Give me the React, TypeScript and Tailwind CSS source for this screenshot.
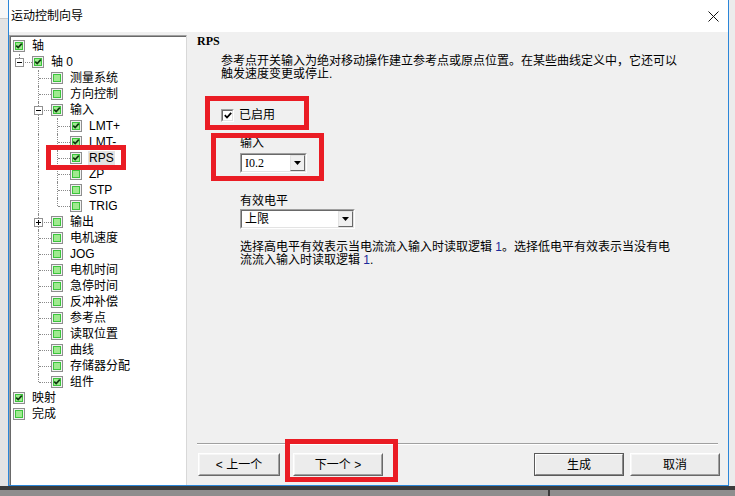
import React from 'react';

const FONT = "font-['Liberation_Sans','Noto_Sans_CJK_SC',sans-serif]";

type Row = {
  t: string;
  l: number;
  c: boolean;
  e?: '-' | '+';
  g?: boolean[];
  last?: boolean;
  sel?: boolean;
};

const L2 = (t: string, c = false, extra: Partial<Row> = {}): Row => ({ t, l: 2, c, g: [false], ...extra });
const L3 = (t: string, c = false, extra: Partial<Row> = {}): Row => ({ t, l: 3, c, g: [false, true], ...extra });

const rows: Row[] = [
  { t: '轴', l: 0, c: true },
  { t: '轴 0', l: 1, c: true, e: '-', last: true, g: [] },
  L2('测量系统'),
  L2('方向控制'),
  L2('输入', true, { e: '-' }),
  L3('LMT+', true),
  L3('LMT-', true),
  L3('RPS', true, { sel: true }),
  L3('ZP'),
  L3('STP'),
  L3('TRIG', false, { last: true }),
  L2('输出', false, { e: '+' }),
  L2('电机速度'),
  L2('JOG'),
  L2('电机时间'),
  L2('急停时间'),
  L2('反冲补偿'),
  L2('参考点'),
  L2('读取位置'),
  L2('曲线'),
  L2('存储器分配'),
  L2('组件', true, { last: true }),
  { t: '映射', l: 0, c: true },
  { t: '完成', l: 0, c: false },
];

function TreeCheck({ checked }: { checked: boolean }) {
  return (
    <svg width="12" height="12" viewBox="0 0 12 12" className="shrink-0">
      <rect x="0.5" y="0.5" width="11" height="11" fill="#f2f2f2" stroke="#8e8e8e" />
      <rect x="2" y="2" width="8" height="8" fill="#3cc43c" />
      <rect x="3" y="3" width="6" height="6" fill="#9fea8f" />
      {checked && <path d="M3.2 5.6 L5.2 7.6 L8.8 3.6" fill="none" stroke="#123a12" strokeWidth="1.7" />}
    </svg>
  );
}

function Expander({ kind }: { kind: '-' | '+' }) {
  return (
    <div className="absolute left-[2px] top-[4px] w-[9px] h-[9px] border border-[#919191] bg-white">
      <div className="absolute left-[1px] top-[3px] w-[5px] h-[1px] bg-black" />
      {kind === '+' && <div className="absolute left-[3px] top-[1px] w-[1px] h-[5px] bg-black" />}
    </div>
  );
}

function TreeRow({ r }: { r: Row }) {
  const cells: React.ReactNode[] = [];
  if (r.l > 0) {
    (r.g || []).forEach((v, i) => {
      cells.push(
        <div key={'g' + i} className="relative w-[19px] h-full shrink-0">
          {v && <div className="absolute left-[6px] top-0 h-full border-l border-dotted border-[#8a8a8a]" />}
        </div>
      );
    });
    cells.push(
      <div key="conn" className="relative w-[19px] h-full shrink-0">
        <div
          className={
            r.last
              ? 'absolute left-[6px] top-0 h-[8px] border-l border-dotted border-[#8a8a8a]'
              : 'absolute left-[6px] top-0 h-full border-l border-dotted border-[#8a8a8a]'
          }
        />
        <div className="absolute left-[7px] top-[8px] w-[12px] border-t border-dotted border-[#8a8a8a]" />
        {r.e && <Expander kind={r.e} />}
      </div>
    );
  }
  return (
    <div className="h-[16px] flex items-center pl-[2px]">
      {cells}
      <TreeCheck checked={r.c} />
      <span
        className={
          r.sel
            ? 'ml-[6px] px-[1px] bg-[#e3e3e3] text-[12px] leading-[14px] text-black whitespace-nowrap'
            : 'ml-[7px] text-[12px] leading-[14px] text-black whitespace-nowrap'
        }
      >
        {r.t}
      </span>
    </div>
  );
}

function Select({ width, value }: { width: string; value: string }) {
  return (
    <div className={`${width} h-[20px] border border-t-[#a0a0a0] border-l-[#a0a0a0] border-b-white border-r-white`}>
      <div className="w-full h-full flex items-center bg-white border border-t-[#696969] border-l-[#696969] border-b-[#e3e3e3] border-r-[#e3e3e3]">
        <span className="flex-1 pl-[3px] text-[12px] leading-[14px] text-black font-['Liberation_Serif','Noto_Sans_CJK_SC',serif]">
          {value}
        </span>
        <div className="w-[15px] h-full bg-[#f0f0f0] flex items-center justify-center border border-t-[#e3e3e3] border-l-[#e3e3e3] border-b-[#696969] border-r-[#696969]">
          <svg width="7" height="4" viewBox="0 0 7 4">
            <path d="M0 0 H7 L3.5 4 Z" fill="#000" />
          </svg>
        </div>
      </div>
    </div>
  );
}

function Btn({ label, width, def }: { label: React.ReactNode; width: string; def?: boolean }) {
  if (def) {
    return (
      <div className={`${width} h-[23px] border border-[#5a5a5a]`}>
        <div className="w-full h-full flex items-center justify-center bg-[#ececec] border border-t-white border-l-white border-b-[#8a8a8a] border-r-[#8a8a8a] text-[12px] text-black">
          {label}
        </div>
      </div>
    );
  }
  return (
    <div className={`${width} h-[23px] border border-t-white border-l-white border-b-[#696969] border-r-[#696969]`}>
      <div className="w-full h-full flex items-center justify-center bg-[#ececec] border border-t-[#f6f6f6] border-l-[#f6f6f6] border-b-[#a0a0a0] border-r-[#a0a0a0] text-[12px] text-black">
        {label}
      </div>
    </div>
  );
}

export default function App() {
  return (
    <div className={`relative w-[735px] h-[496px] overflow-hidden bg-[#e8e8e8] ${FONT}`}>
      <div className="flex h-[486px]">
        <div className="w-[8px] h-full flex flex-col">
          <div className="h-[18px] bg-[#f7f7f7]" />
          <div className="h-[1px] bg-[#c8c8c8]" />
          <div className="flex-1 bg-[#e4e4e4]" />
        </div>
        <div className="w-[721px] h-full flex flex-col border-x border-b border-[#2b86d8] bg-[#f0f0f0]">
          <div className="h-[32px] bg-white flex items-center justify-between pl-[2px] pr-[9px]">
            <span className="text-[12px] text-black">运动控制向导</span>
            <svg width="11" height="11" viewBox="0 0 11 11">
              <path d="M0.5 0.5 L10.5 10.5 M10.5 0.5 L0.5 10.5" stroke="#111" strokeWidth="1" />
            </svg>
          </div>
          <div className="flex flex-1 min-h-0">
            <div className="w-[178px] mt-[3px] h-[450px] border-t border-l border-[#a0a0a0] border-r border-r-[#d8d8d8]">
              <div className="w-full h-full bg-white border-t border-l border-[#696969] pt-[1px]">
                {rows.map((r, i) => (
                  <TreeRow key={i} r={r} />
                ))}
              </div>
            </div>
            <div className="flex-1 flex flex-col">
              <div className="pl-[10px] mt-[2px] h-[14px] text-[12px] leading-[14px] font-bold text-black font-['Liberation_Serif',serif]">
                RPS
              </div>
              <div className="pl-[34px] mt-[7px] text-[12px] leading-[13px] text-black whitespace-nowrap">
                参考点开关输入为绝对移动操作建立参考点或原点位置。在某些曲线定义中，它还可以
                <br />
                触发速度变更或停止.
              </div>
              <div className="pl-[34px] mt-[26px] h-[16px] flex items-center">
                <div className="w-[13px] h-[13px] border border-t-[#a0a0a0] border-l-[#a0a0a0] border-b-white border-r-white">
                  <div className="w-full h-full bg-white border border-t-[#696969] border-l-[#696969] border-b-[#e3e3e3] border-r-[#e3e3e3] flex items-center justify-center">
                    <svg width="8" height="7" viewBox="0 0 8 7">
                      <path d="M0.8 3.2 L3 5.5 L7.2 0.8" fill="none" stroke="#000" strokeWidth="1.8" />
                    </svg>
                  </div>
                </div>
                <span className="ml-[5px] text-[12px] leading-[14px] text-black">已启用</span>
              </div>
              <div className="pl-[53px] mt-[14px] h-[13px] text-[12px] leading-[13px] text-black">输入</div>
              <div className="pl-[53px] mt-[3px]">
                <Select width="w-[67px]" value="I0.2" />
              </div>
              <div className="pl-[53px] mt-[22px] h-[13px] text-[12px] leading-[13px] text-black">有效电平</div>
              <div className="pl-[53px] mt-[1px]">
                <Select width="w-[115px]" value="上限" />
              </div>
              <div className="pl-[53px] mt-[12px] text-[12px] leading-[13px] text-black whitespace-nowrap">
                选择高电平有效表示当电流流入输入时读取逻辑 <span className="text-[#1a2a9a]">1</span>。选择低电平有效表示当没有电
                <br />
                流流入输入时读取逻辑 <span className="text-[#1a2a9a]">1</span>.
              </div>
              <div className="flex-1" />
              <div className="mx-[10px] h-[1px] bg-[#a0a0a0]" />
              <div className="mx-[10px] h-[1px] bg-white" />
              <div className="mt-[8px] mb-[9px] flex items-center pl-[11px] pr-[8px]">
                <Btn width="w-[82px]" label={<span>&lt; 上一个</span>} />
                <div className="ml-[13px]">
                  <Btn width="w-[90px]" label={<span>下一个 &gt;</span>} />
                </div>
                <div className="flex-1" />
                <Btn width="w-[90px]" label="生成" def />
                <div className="ml-[6px]">
                  <Btn width="w-[90px]" label="取消" />
                </div>
              </div>
            </div>
          </div>
        </div>
        <div className="flex-1 h-full bg-[#ececec]" />
      </div>
      <div className="h-[4px] bg-[#3c3c3c]" />
      <div className="h-[6px] bg-[#8e8e8e] flex">
        <div className="w-[548px]" />
        <div className="w-[2px] bg-[#3c3c3c]" />
      </div>

      {/* red annotation frames */}
      <div className="absolute left-[46px] top-[145px] w-[80px] h-[25px] border-[5px] border-[#ea1c24]" />
      <div className="absolute left-[205px] top-[96px] w-[104px] h-[34px] border-[5px] border-[#ea1c24]" />
      <div className="absolute left-[211px] top-[133px] w-[113px] h-[48px] border-[5px] border-[#ea1c24]" />
      <div className="absolute left-[285px] top-[439px] w-[113px] h-[43px] border-[5px] border-[#ea1c24]" />
    </div>
  );
}
